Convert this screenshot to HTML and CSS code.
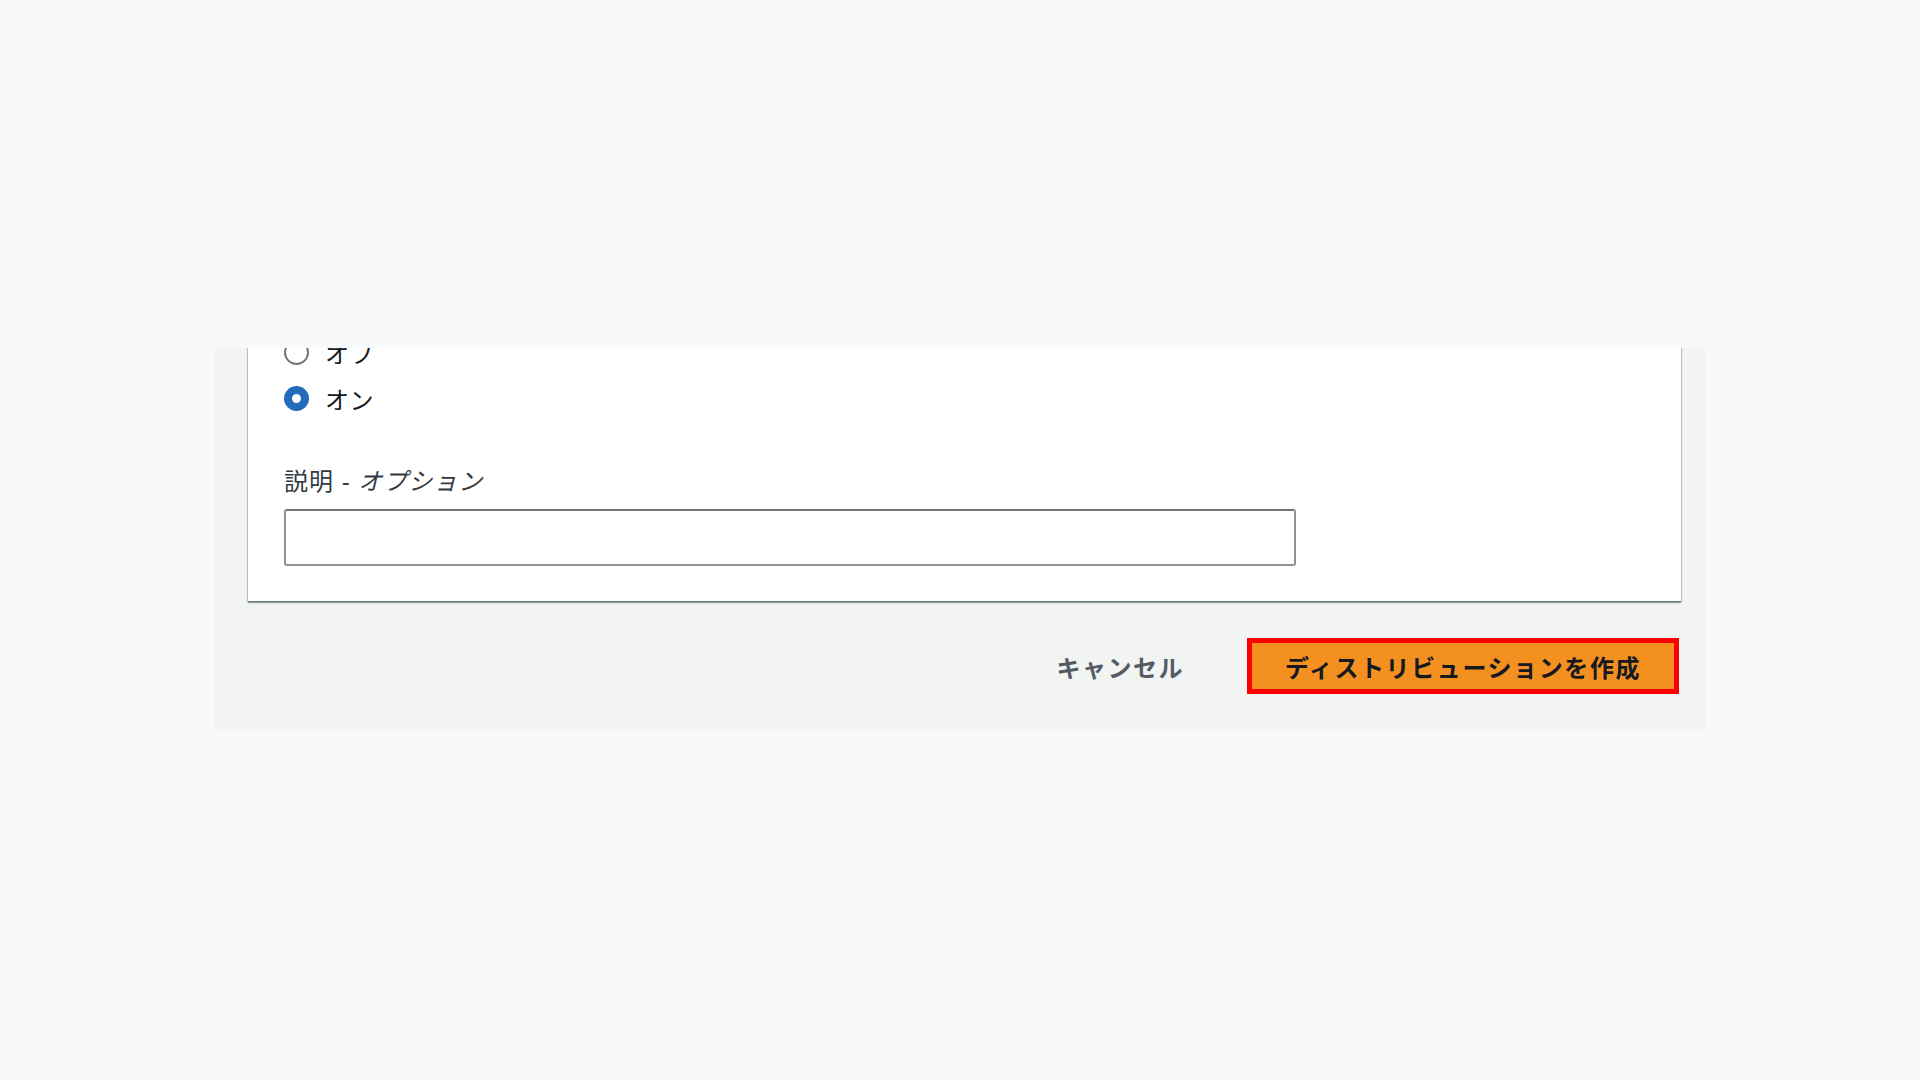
FILE: index.html
```html
<!DOCTYPE html>
<html lang="ja">
<head>
    <meta charset="UTF-8">
    <meta name="viewport" content="width=device-width, initial-scale=1.0">
    <title>ディストリビューションを作成</title>
    <link rel="stylesheet" href="styles.css">
</head>
<body>
    <div class="stage">
        <div class="panel">
            <div class="card">
                <div class="radio-group">
                    <label class="radio-row">
                        <span class="radio"></span>
                        <span class="radio-text">オフ</span>
                    </label>
                    <label class="radio-row">
                        <span class="radio checked"></span>
                        <span class="radio-text">オン</span>
                    </label>
                </div>
                <div class="field">
                    <div class="field-label">説明 - <i>オプション</i></div>
                    <input class="text-input" type="text">
                </div>
            </div>
            <div class="actions">
                <button class="btn-link">キャンセル</button>
                <button class="btn-primary">ディストリビューションを作成</button>
            </div>
        </div>
    </div>
</body>
</html>
```

FILE: styles.css
```css
/* Page */
body {
    margin: 0;
    background: #f8f9fa;
    font-family: "Liberation Sans", "Noto Sans CJK JP", sans-serif;
    color: #16191f;
}

.stage {
    padding: 348px 0 0 215px;
}

/* Grey form wrapper (clipped at the top) */
.panel {
    width: 1490px;
    height: 383px;
    box-sizing: border-box;
    background: #f2f3f3;
    padding: 0 24px 0 33px;
    overflow: hidden;
}

/* White container */
.card {
    background: #ffffff;
    padding: 0 36px 35px 36px;
    box-shadow: 0 2px 1px rgba(0, 28, 36, 0.35), 1px 1px 1px rgba(0, 28, 36, 0.18), -1px 1px 1px rgba(0, 28, 36, 0.18);
}

/* Radio buttons */
.radio-group {
    margin-top: -19px;
    display: flex;
    flex-direction: column;
}

.radio-row {
    display: flex;
    align-items: center;
    gap: 16px;
    height: 46px;
    font-size: 24px;
    letter-spacing: 0.5px;
}

.radio {
    width: 25px;
    height: 25px;
    box-sizing: border-box;
    border: 2px solid #6f757b;
    border-radius: 50%;
    background: #ffffff;
}

.radio.checked {
    border: 8px solid #226cbb;
}

/* Description field */
.field {
    margin-top: 45px;
}

.field-label {
    font-size: 24px;
    line-height: 32px;
    letter-spacing: 1px;
    color: #333a42;
    margin-bottom: 11px;
}

.field-label i {
    font-style: italic;
}

.text-input {
    display: block;
    width: 1012px;
    height: 57px;
    box-sizing: border-box;
    border: 2px solid #8c9297;
    border-top-color: #6e747b;
    border-radius: 3px;
    background: #ffffff;
}

/* Footer buttons */
.actions {
    margin-top: 37px;
    display: flex;
    justify-content: flex-end;
    align-items: center;
    gap: 55px;
    padding-right: 2px;
}

.btn-link {
    border: none;
    background: none;
    font-family: inherit;
    font-size: 24px;
    font-weight: bold;
    letter-spacing: 1.5px;
    color: #545b64;
    padding: 0 8px;
}

.btn-primary {
    width: 432px;
    height: 56px;
    border: 5px solid #ff0000;
    background: #f39020;
    font-family: inherit;
    font-size: 24px;
    font-weight: bold;
    letter-spacing: 1.6px;
    color: #16191f;
    padding: 0;
}
```
